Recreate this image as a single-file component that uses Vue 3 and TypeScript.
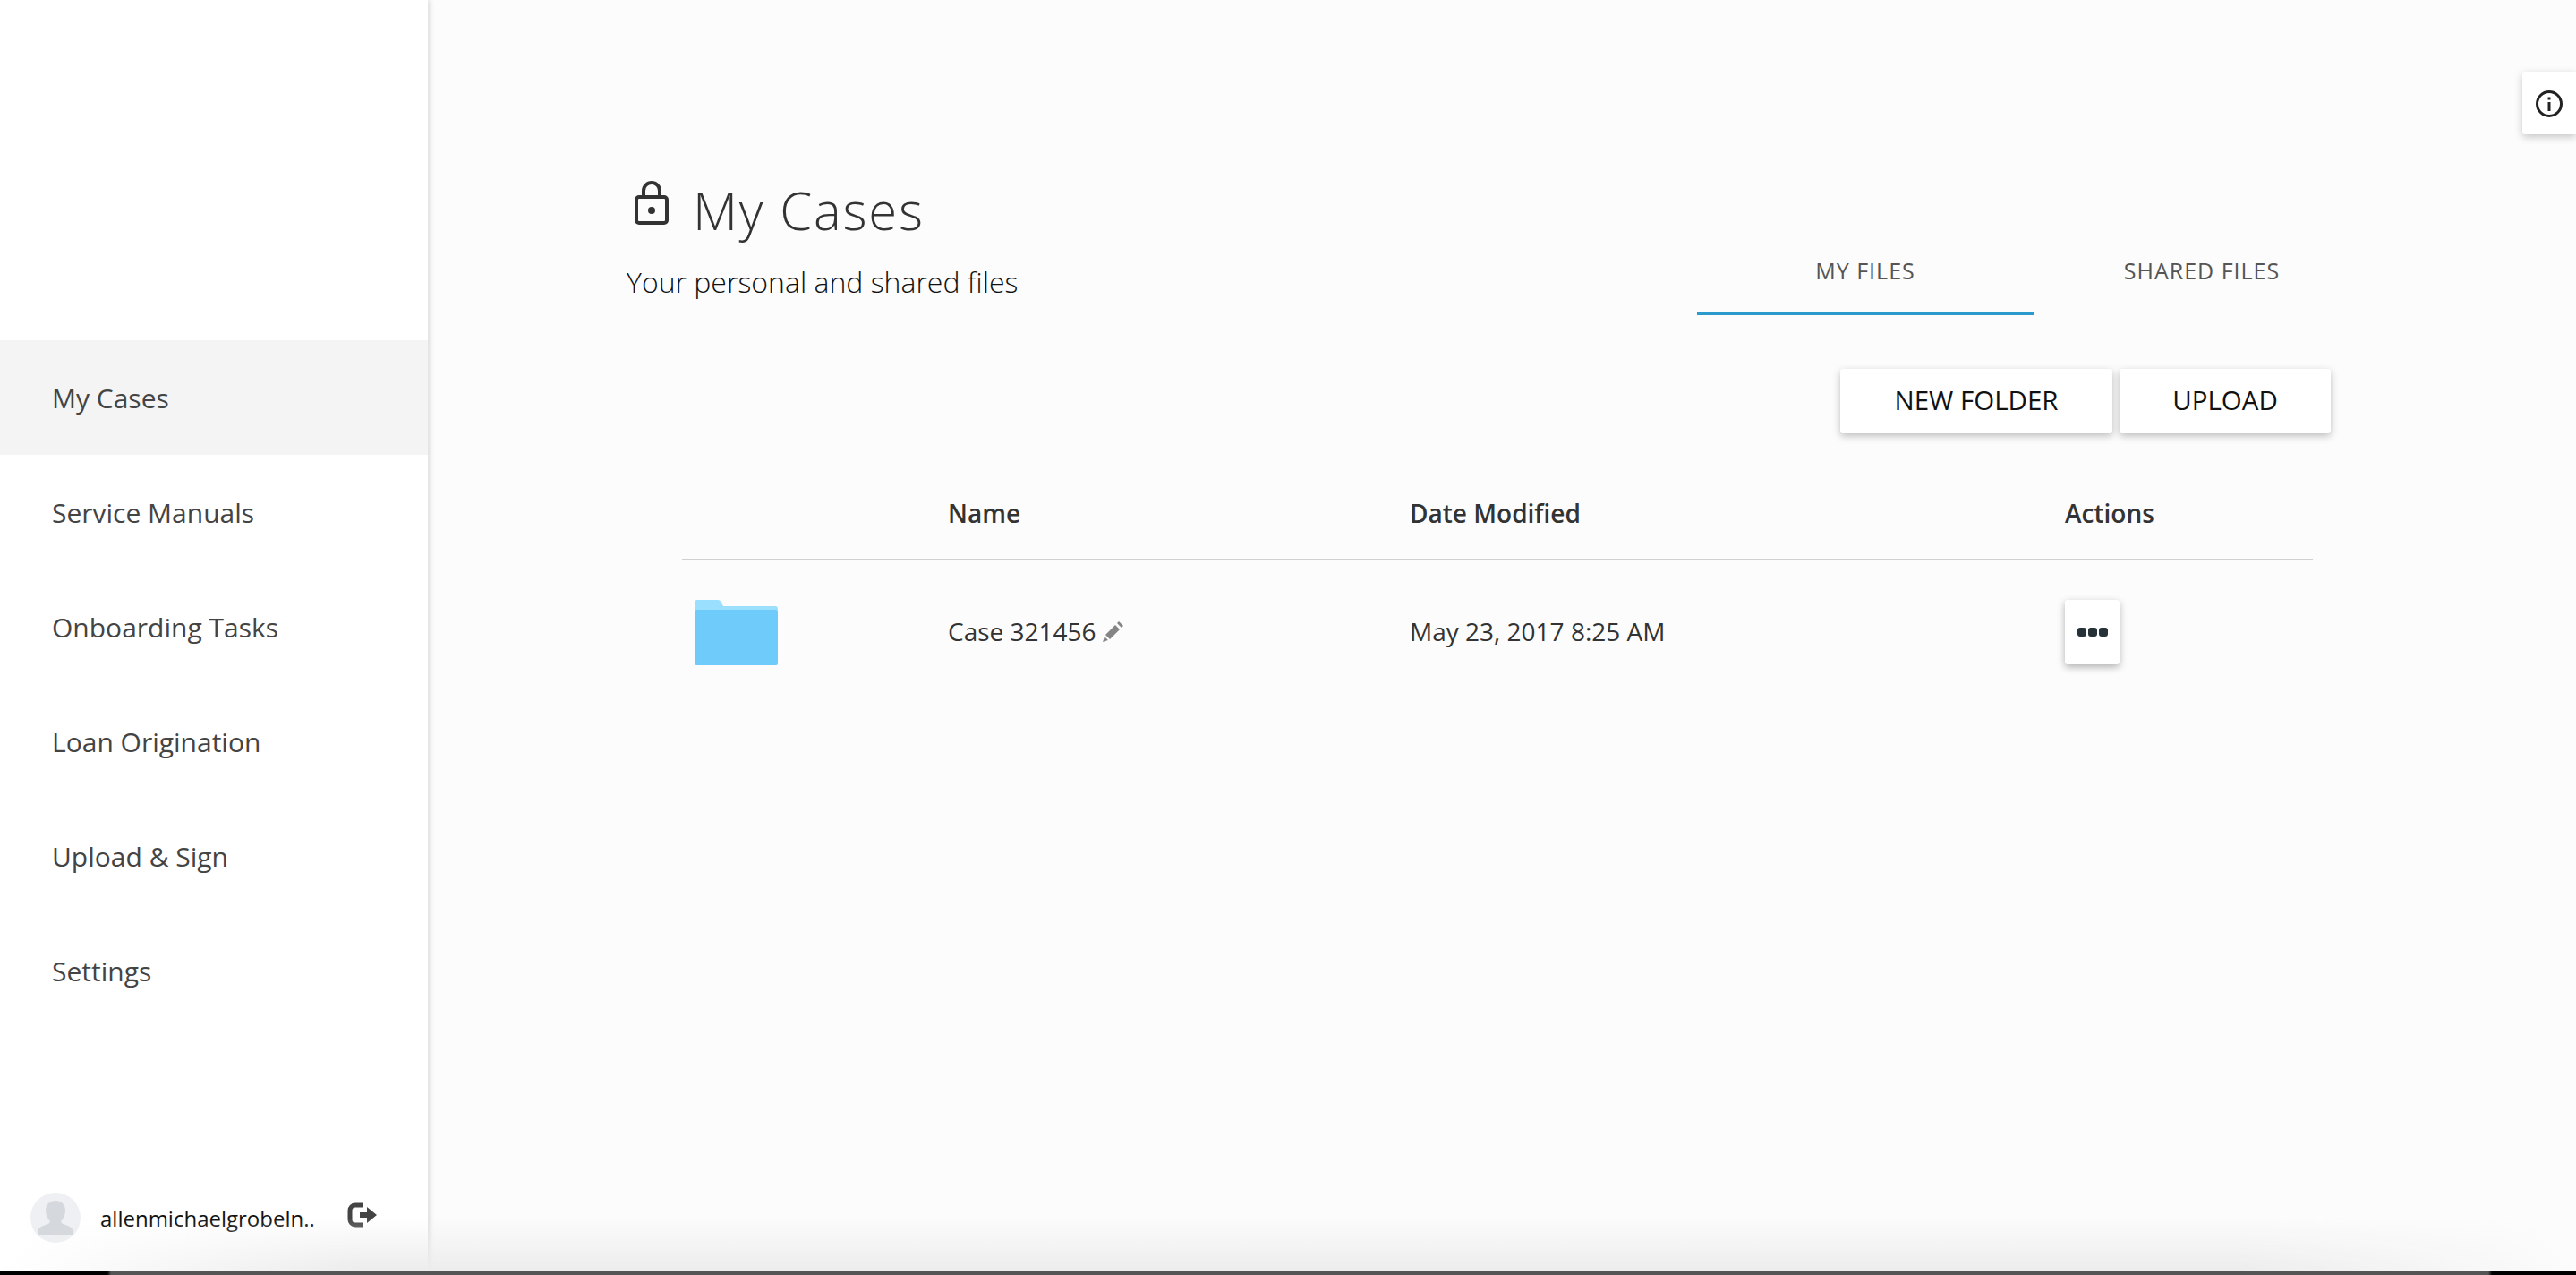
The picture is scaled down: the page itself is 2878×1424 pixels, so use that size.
<script setup lang="ts">
const navItems = ["My Cases", "Service Manuals", "Onboarding Tasks", "Loan Origination", "Upload & Sign", "Settings"]
</script>

<template>
  <div class="app">
    <aside class="sidebar">
      <nav class="nav">
        <a v-for="(item, index) in navItems" :key="item" class="nav-item" :class="{ active: index === 0 }">{{ item }}</a>
      </nav>
      <div class="user">
        <svg class="avatar" viewBox="0 0 56 56">
          <circle cx="28" cy="28" r="28" fill="#eef0f3" />
          <path d="M9 47v-5c0-3 3-4 8-6 3-1 5-2 5-4-3-3-5-7-5-12 0-6 4-11 11-11s11 5 11 11c0 5-2 9-5 12 0 2 2 3 5 4 5 2 8 3 8 6v5z" fill="#d5d8dc" />
        </svg>
        <span class="user-name">allenmichaelgrobeln..</span>
        <svg class="logout" viewBox="0 0 33 28">
          <path d="M17 3H9a6 6 0 0 0-6 6v10a6 6 0 0 0 6 6h8" fill="none" stroke="#444" stroke-width="5" />
          <path d="M14 11h8V5l11 9-11 9v-6h-8z" fill="#444" />
        </svg>
      </div>
    </aside>

    <main class="main">
      <header class="head">
        <div class="title-block">
          <div class="title-row">
            <svg class="lock" viewBox="0 0 38 49">
              <path d="M10 18V11a9 9 0 0 1 18 0v7" fill="none" stroke="#333" stroke-width="4" />
              <rect x="2" y="18" width="34" height="29" rx="3" fill="none" stroke="#333" stroke-width="4" />
              <circle cx="19" cy="33" r="4" fill="#333" />
            </svg>
            <h1 class="title">My Cases</h1>
          </div>
          <p class="subtitle">Your personal and shared files</p>
        </div>
        <div class="tabs">
          <div class="tab active">MY FILES</div>
          <div class="tab">SHARED FILES</div>
        </div>
      </header>

      <div class="buttons">
        <button class="btn new-folder">NEW FOLDER</button>
        <button class="btn upload">UPLOAD</button>
      </div>

      <div class="table">
        <div class="row header-row">
          <div></div>
          <div>Name</div>
          <div>Date Modified</div>
          <div>Actions</div>
        </div>
        <div class="row body-row">
          <svg class="folder" viewBox="0 0 93 73">
            <path d="M0 14V3a3 3 0 0 1 3-3h23c2 0 3 1 4 3l2 4h58a3 3 0 0 1 3 3v6H0z" fill="#9bdfff" />
            <path d="M0 14a3 3 0 0 1 3-3h87a3 3 0 0 1 3 3v57a2 2 0 0 1-2 2H2a2 2 0 0 1-2-2z" fill="#6fcbfa" />
          </svg>
          <div class="case-name cell-text">
            <span>Case 321456</span>
            <svg class="pencil" viewBox="0 0 23 23">
              <path d="M3 15L14 4l5 5L8 20zM16 2l2-2 5 5-2 2zM2 17l4 4-6 2z" fill="#858585" />
            </svg>
          </div>
          <div class="cell-text">May 23, 2017 8:25 AM</div>
          <div>
            <button class="more">
              <i></i><i></i><i></i>
            </button>
          </div>
        </div>
      </div>
    </main>

    <button class="info">
      <svg viewBox="0 0 32 32" width="32" height="32">
        <circle cx="16" cy="16" r="13.5" fill="none" stroke="#222" stroke-width="3" />
        <rect x="14.5" y="14" width="3" height="10" fill="#222" />
        <rect x="14.5" y="8.5" width="3" height="3" fill="#222" />
      </svg>
    </button>

    <div class="bottom-fade"></div>
    <div class="bottom-strip"></div>
  </div>
</template>

<style>
html,
body {
  margin: 0;
  background: #fcfcfc;
}
</style>

<style scoped>
.app {
  position: relative;
  display: flex;
  width: 2878px;
  height: 1424px;
  overflow: hidden;
  background: #fcfcfc;
  font-family: "Open Sans", "Liberation Sans", sans-serif;
  color: #333;
}
.sidebar {
  display: flex;
  flex-direction: column;
  box-sizing: border-box;
  flex: none;
  width: 478px;
  padding-top: 380px;
  background: #fff;
  box-shadow: 2px 0 6px rgba(0, 0, 0, 0.14);
}
.nav {
  display: flex;
  flex-direction: column;
}
.nav-item {
  display: flex;
  align-items: center;
  height: 128px;
  padding-left: 58px;
  font-size: 30px;
  color: #444;
}
.nav-item.active {
  background: #f4f4f4;
}
.user {
  display: flex;
  align-items: center;
  margin-top: auto;
  margin-bottom: 36px;
  padding-left: 34px;
}
.avatar {
  flex: none;
  width: 56px;
  height: 56px;
}
.user-name {
  margin-left: 22px;
  font-size: 24px;
  color: #111;
}
.logout {
  flex: none;
  width: 33px;
  height: 28px;
  margin-left: 36px;
  margin-top: -7px;
}
.main {
  flex: 1;
  padding-top: 202px;
  min-width: 0;
}
.head {
  display: flex;
  justify-content: space-between;
  padding: 0 230px 0 221px;
}
.title-row {
  display: flex;
  align-items: flex-start;
}
.lock {
  flex: none;
  width: 38px;
  height: 49px;
  margin: 0 27px 0 10px;
}
.title {
  margin: -2px 0 0;
  font-size: 58px;
  font-weight: 300;
  line-height: 70px;
  letter-spacing: 1.8px;
  color: #333;
}
.subtitle {
  margin: 23px 0 0 1px;
  font-size: 32px;
  font-weight: 300;
  line-height: 44px;
  color: #111;
}
.tabs {
  display: flex;
  margin-top: 66px;
  height: 84px;
}
.tab {
  box-sizing: border-box;
  width: 376px;
  padding-top: 16px;
  text-align: center;
  font-size: 25px;
  line-height: 36px;
  letter-spacing: 1px;
  color: #555;
}
.tab.active {
  border-bottom: 4px solid #2d9ace;
}
.buttons {
  display: flex;
  justify-content: flex-end;
  gap: 8px;
  margin-top: 60px;
  padding-right: 274px;
}
.btn {
  height: 72px;
  padding: 0 0 3px;
  border: none;
  border-radius: 3px;
  background: #fff;
  box-shadow: 0 3px 8px rgba(0, 0, 0, 0.25);
  font-family: inherit;
  font-size: 29.5px;
  color: #111;
}
.new-folder {
  width: 304px;
}
.upload {
  width: 236px;
}
.table {
  margin: 28px 294px 0 284px;
}
.row {
  display: grid;
  grid-template-columns: 297px 516px 732px 1fr;
  align-items: center;
  font-size: 28px;
}
.header-row {
  box-sizing: border-box;
  height: 114px;
  padding-top: 10px;
  border-bottom: 2px solid #d0d0d0;
  font-weight: 600;
  color: #333;
}
.body-row {
  height: 160px;
  color: #333;
}
.cell-text {
  margin-top: -2px;
}
.folder {
  width: 93px;
  height: 73px;
  margin-left: 14px;
}
.case-name {
  display: flex;
  align-items: center;
  gap: 7px;
}
.pencil {
  width: 23px;
  height: 23px;
}
.more {
  display: flex;
  align-items: center;
  justify-content: center;
  gap: 2px;
  width: 61px;
  height: 72px;
  padding: 0;
  border: none;
  border-radius: 3px;
  background: #fff;
  box-shadow: 0 3px 8px rgba(0, 0, 0, 0.3);
}
.more i {
  width: 10px;
  height: 10px;
  border-radius: 3px;
  background: #263238;
}
.info {
  position: absolute;
  top: 80px;
  right: 0;
  display: flex;
  align-items: center;
  justify-content: center;
  width: 60px;
  height: 70px;
  padding: 2px 0 0;
  border: none;
  border-radius: 3px 0 0 3px;
  background: #fff;
  box-shadow: 0 3px 10px rgba(0, 0, 0, 0.22);
}
.bottom-fade {
  position: absolute;
  left: 0;
  right: 0;
  bottom: 4px;
  height: 60px;
  background: linear-gradient(to bottom, rgba(236, 236, 236, 0), #ececec);
  -webkit-mask-image: linear-gradient(to right, transparent 0, #000 400px, #000 2500px, transparent 2878px);
  mask-image: linear-gradient(to right, transparent 0, #000 400px, #000 2500px, transparent 2878px);
  pointer-events: none;
}
.bottom-strip {
  position: absolute;
  left: 0;
  right: 0;
  bottom: 0;
  height: 4px;
  background: linear-gradient(to right, #000 120px, #555 124px, #555 2780px, #000 2784px);
}
</style>
